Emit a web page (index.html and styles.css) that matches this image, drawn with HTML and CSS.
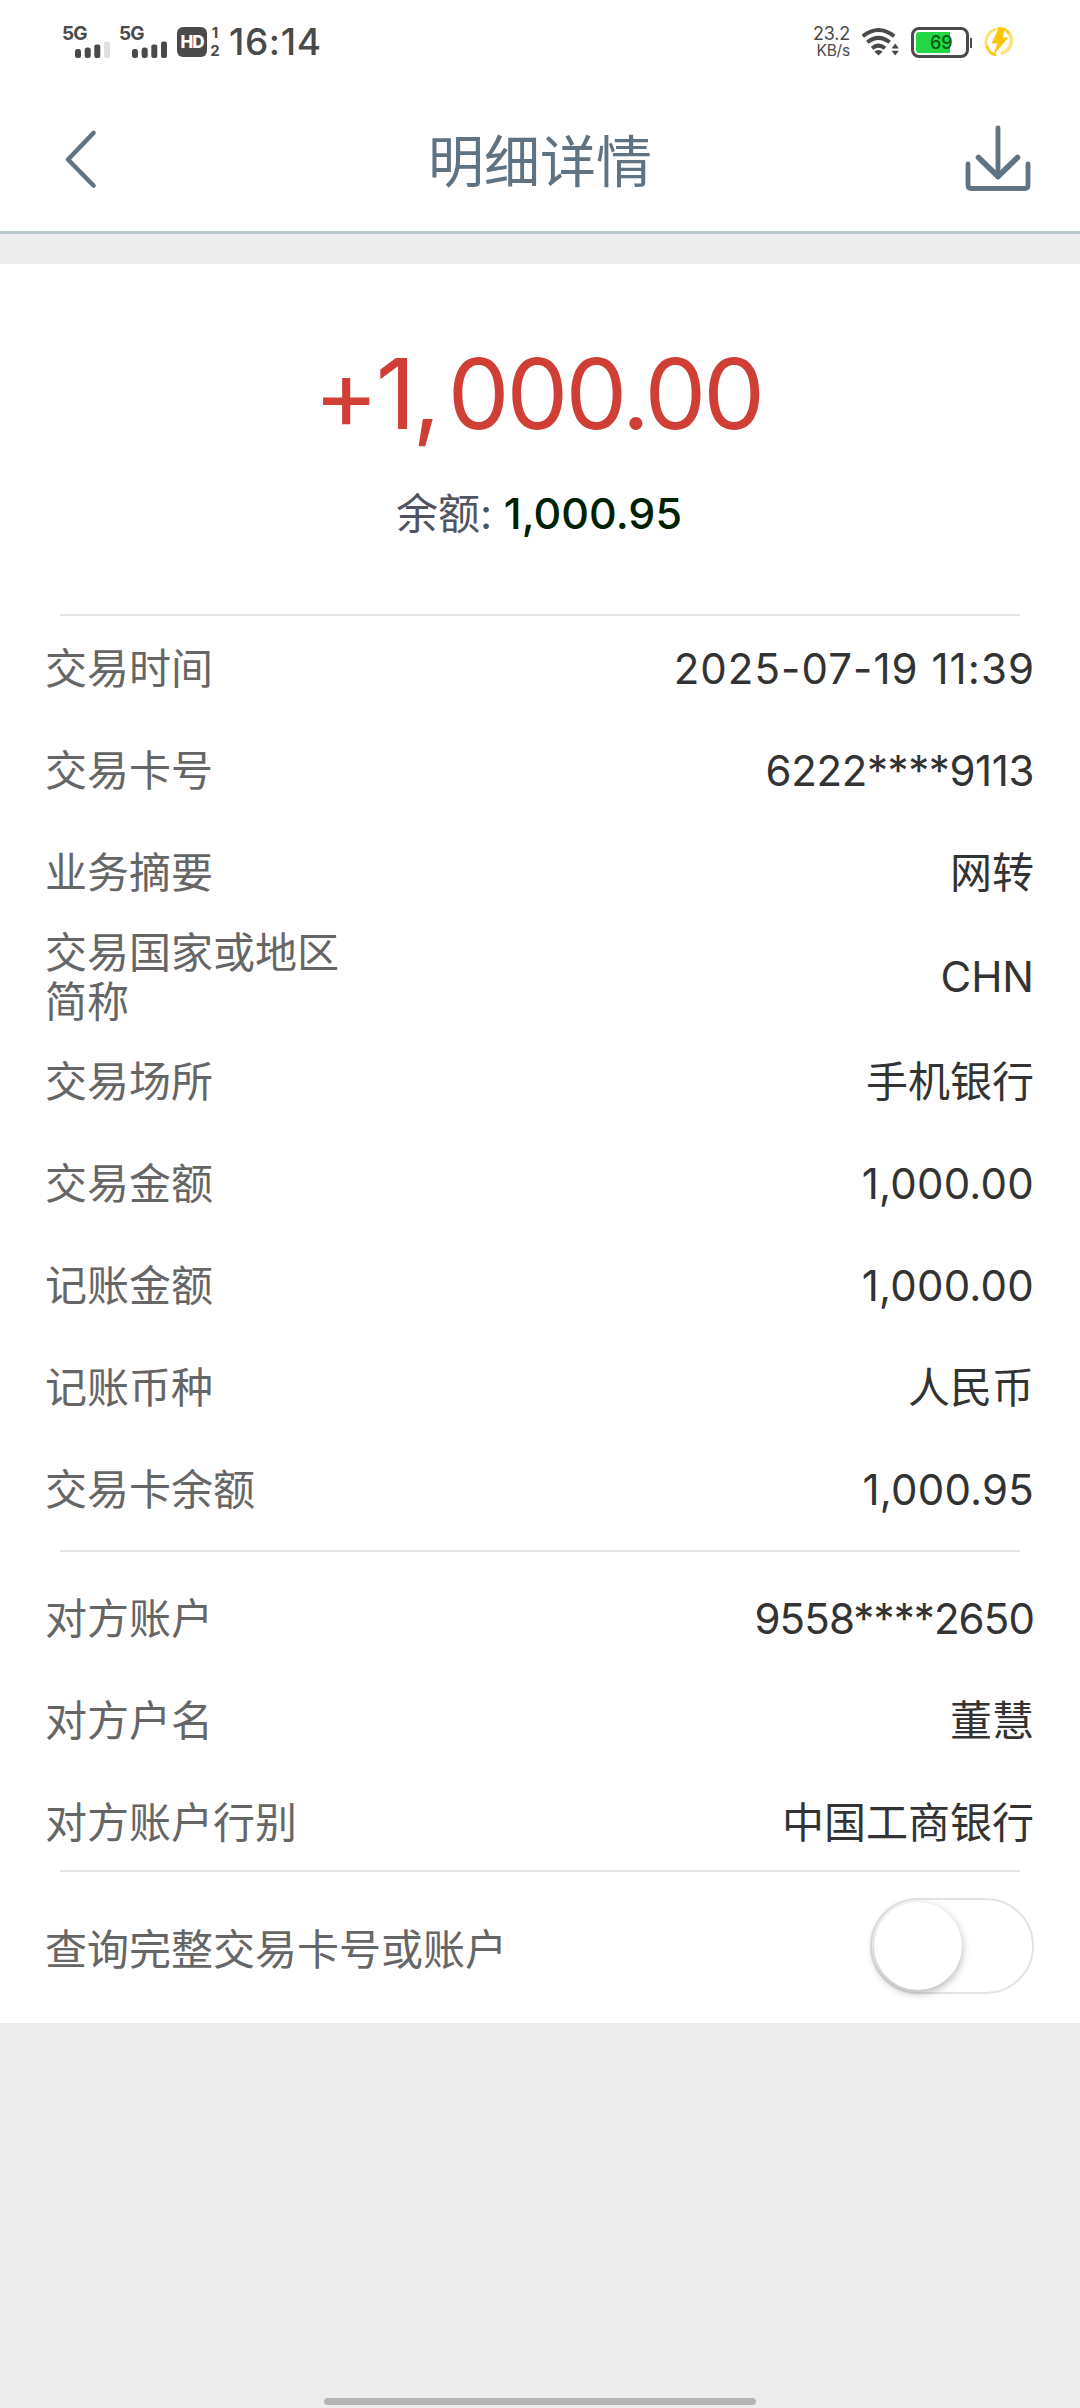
FILE: index.html
```html
<!DOCTYPE html>
<html lang="zh-CN">
<head>
<meta charset="utf-8">
<title>明细详情</title>
<link rel="stylesheet" href="styles.css">
</head>
<body>
<div class="status">
  <div class="signal">
    <span class="net">5G</span>
    <svg width="36" height="17" viewBox="0 0 36 17" fill="#4a4a4a"><rect x="0" y="8" width="6" height="9" rx="2.5"/><rect x="9.7" y="6.5" width="6" height="10.5" rx="2.5"/><rect x="19.3" y="3.5" width="6" height="13.5" rx="2"/><rect x="29" y="0.5" width="6" height="16.5" rx="2" fill="#dedede"/></svg>
  </div>
  <div class="signal">
    <span class="net">5G</span>
    <svg width="36" height="17" viewBox="0 0 36 17" fill="#4a4a4a"><rect x="0" y="8" width="6" height="9" rx="2.5"/><rect x="9.7" y="6.5" width="6" height="10.5" rx="2.5"/><rect x="19.3" y="3.5" width="6" height="13.5" rx="2"/><rect x="29" y="0.5" width="6" height="16.5" rx="2"/></svg>
  </div>
  <span class="hd">HD</span>
  <span class="sims"><span>1</span><span>2</span></span>
  <span class="clock">16:14</span>
  <span class="speed"><span>23.2</span><span class="unit">KB/s</span></span>
  <svg class="wifi" width="39" height="30" viewBox="0 0 39 30" fill="none" stroke="#4a4a4a" stroke-width="4">
    <path d="M1.8 9.3Q17.5-3.2 33.2 9.3"/><path d="M6.3 15.3Q17.5 6.5 28.7 15.3"/><path d="M11 21.3Q17.5 16 24 21.3"/>
    <path d="M13.3 24.5Q17.5 21.5 21.7 24.5L17.5 28.5z" fill="#4a4a4a" stroke="none"/>
    <path d="M30.5 21.5L34.2 16.5 37.9 21.5zM30.5 23.8H37.9L34.2 28.5z" fill="#4a4a4a" stroke="none"/>
  </svg>
  <span class="battery"><span class="charge">69</span></span>
  <svg class="bolt" width="32" height="32" viewBox="0 0 32 32">
    <g fill="none" stroke-linecap="round"><path d="M12.5 3.5A13 13 0 0 0 4 21" stroke="#fbe27a" stroke-width="3"/><path d="M4 21Q7 28 12 28.5" stroke="#f8cd1c" stroke-width="3"/><path d="M24.5 5.5A13 13 0 0 1 19.5 27" stroke="#fbe27a" stroke-width="3.5"/><path d="M15.5 2.5Q21.5 1.5 25.5 7" stroke="#f8cd1c" stroke-width="2.5"/></g>
    <path d="M15.5 2.5H22L19.5 11.5H25.5L10 29.5 14.5 17.5H8.5z" fill="#fbc608"/>
  </svg>
</div>

<header class="bar">
  <svg class="back" width="40" height="64" viewBox="0 0 40 64" fill="none" stroke="#5f7383" stroke-width="4.6" stroke-linecap="round" stroke-linejoin="round"><path d="M35.5 6L10 32.5 35.5 58.5"/></svg>
  <h1 class="title">明细详情</h1>
  <svg class="save" width="72" height="72" viewBox="0 0 72 72" fill="none" stroke="#5f7383" stroke-width="4.8" stroke-linecap="round" stroke-linejoin="round"><path d="M36 6V55"/><path d="M16.5 35.5L36 54.5 55.5 35.5" stroke-width="5.6"/><path d="M6 42V63Q6 66.5 9.5 66.5H62.5Q66 66.5 66 63V42"/></svg>
</header>

<main class="card">
  <section class="summary">
    <div class="amount">+1<span class="comma">,</span>000.00</div>
    <div class="balance">余额: <b class="total">1,000.95</b></div>
  </section>
  <hr class="rule">
  <dl class="rows">
    <div class="row"><dt>交易时间</dt><dd class="date">2025-07-19 11:39</dd></div>
    <div class="row"><dt>交易卡号</dt><dd class="num">6222****9113</dd></div>
    <div class="row"><dt>业务摘要</dt><dd>网转</dd></div>
    <div class="row tall"><dt>交易国家或地区简称</dt><dd>CHN</dd></div>
    <div class="row"><dt>交易场所</dt><dd>手机银行</dd></div>
    <div class="row"><dt>交易金额</dt><dd class="money">1,000.00</dd></div>
    <div class="row"><dt>记账金额</dt><dd class="money">1,000.00</dd></div>
    <div class="row"><dt>记账币种</dt><dd>人民币</dd></div>
    <div class="row"><dt>交易卡余额</dt><dd class="money">1,000.95</dd></div>
  </dl>
  <hr class="rule middle">
  <dl class="rows payee">
    <div class="row"><dt>对方账户</dt><dd class="num">9558****2650</dd></div>
    <div class="row"><dt>对方户名</dt><dd>董慧</dd></div>
    <div class="row"><dt>对方账户行别</dt><dd>中国工商银行</dd></div>
  </dl>
  <hr class="rule last">
  <div class="option">
    <span class="label">查询完整交易卡号或账户</span>
    <span class="switch"><span class="knob"></span></span>
  </div>
</main>
<footer class="foot"><div class="home"></div></footer>
</body>
</html>
```
FILE: styles.css
```css
* { box-sizing: border-box; }
body {
  margin: 0;
  width: 1080px;
  height: 2408px;
  display: flex;
  flex-direction: column;
  background: #ededed;
  font-family: Inter, "Noto Sans CJK SC", sans-serif;
  color: #333;
  overflow: hidden;
}
svg { display: block; flex: none; }

.status {
  height: 84px;
  padding: 0 65px 0 62px;
  display: flex;
  align-items: center;
  background: #fff;
  color: #4a4a4a;
}
.signal {
  width: 48px;
  height: 32px;
  margin-right: 9px;
  display: flex;
  flex-direction: column;
  justify-content: space-between;
}
.signal svg { margin-left: 13px; }
.net { font-size: 19px; font-weight: 700; line-height: 15px; letter-spacing: -1px; }
.hd {
  width: 30px;
  height: 30px;
  margin-left: 1px;
  border-radius: 6px;
  background: #4a4a4a;
  color: #fff;
  font-size: 17px;
  font-weight: 800;
  letter-spacing: -1px;
  line-height: 30px;
  text-align: center;
}
.sims {
  width: 14px;
  margin-left: 1px;
  display: flex;
  flex-direction: column;
  font-size: 15px;
  font-weight: 700;
  line-height: 18px;
  text-align: center;
}
.clock {
  margin-left: 7px;
  font-size: 37px;
  font-weight: 450;
  line-height: 44px;
  letter-spacing: .6px;
}
.speed {
  width: 38px;
  margin-left: auto;
  display: flex;
  flex-direction: column;
  font-size: 18px;
  line-height: 18px;
  letter-spacing: -.2px;
  text-align: right;
}
.unit { font-size: 15.5px; line-height: 16px; }
.wifi { margin-left: 11px; }
.battery {
  position: relative;
  width: 58px;
  height: 31px;
  margin-left: 11px;
  padding: 2px;
  border: 3px solid #4a4a4a;
  border-radius: 8px;
}
.battery::after {
  content: "";
  position: absolute;
  left: 56px;
  top: 8px;
  width: 2px;
  height: 10px;
  background: #4a4a4a;
}
.charge {
  display: block;
  height: 21px;
  padding-left: 14px;
  border-radius: 3px;
  background: linear-gradient(90deg, #23d844 34px, #fff 34px);
  color: #0a5a18;
  font-size: 18px;
  font-weight: 500;
  line-height: 21px;
}
.bolt { margin-left: 14px; }

.bar {
  height: 150px;
  padding: 0 46px 0 58px;
  display: flex;
  align-items: center;
  justify-content: space-between;
  background: #fff;
  border-bottom: 3px solid #b8c8cd;
}
.back { margin-bottom: -2px; }
.title {
  margin: 9px -20px 0 0;
  font-size: 56px;
  font-weight: 400;
  line-height: 80px;
  color: #5f7383;
}

.card { height: 1759px; margin-top: 30px; background: #fff; }
.summary { height: 350px; padding-top: 70px; text-align: center; }
.amount {
  padding-right: 4px;
  font-size: 98px;
  line-height: 120px;
  letter-spacing: -3px;
  color: #d03f36;
}
.comma { margin-right: 10px; }
.balance {
  margin-top: 29px;
  padding-right: 2px;
  font-size: 42px;
  line-height: 60px;
  color: #51535f;
}
.total { font-size: 43px; font-weight: 550; color: #002000; }

.rule { height: 2px; margin: 0 60px; border: 0; background: #e4e4e4; }
.rows { margin: 1px 0 0; padding: 0 46px 0 45px; }
.row {
  height: 102px;
  display: flex;
  align-items: center;
  justify-content: space-between;
  font-size: 42px;
  line-height: 49px;
}
.row.tall { height: 107px; }
dt, .label { color: #666; }
dt { width: 300px; }
dd { margin: 0; white-space: nowrap; }
.date { letter-spacing: 1.05px; margin-right: -1px; }
.num { letter-spacing: -.4px; }
.money { letter-spacing: .2px; }
.middle { margin-top: 10px; }
.payee { margin-top: 15px; }
.payee .num { letter-spacing: -.9px; }
.last { margin-top: -3px; }

.option {
  height: 149px;
  padding: 0 46px 0 45px;
  display: flex;
  align-items: center;
  justify-content: space-between;
  font-size: 42px;
}
.switch {
  width: 164px;
  height: 96px;
  margin-top: -2px;
  padding: 2px;
  border: 2px solid #e4e4e4;
  border-radius: 48px;
}
.knob {
  display: block;
  width: 88px;
  height: 88px;
  border-radius: 50%;
  background: #fff;
  box-shadow: 0 3px 9px rgba(0, 0, 0, .3);
}

.foot {
  flex: 1;
  display: flex;
  align-items: flex-end;
  justify-content: center;
  padding-bottom: 3px;
}
.home { width: 432px; height: 7px; border-radius: 4px; background: #b4b4b4; }
```
